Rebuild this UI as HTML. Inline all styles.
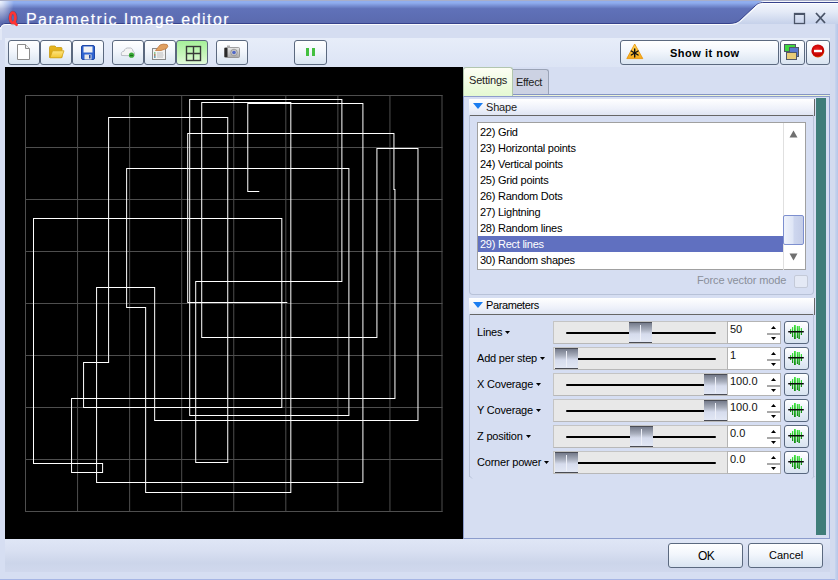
<!DOCTYPE html>
<html><head><meta charset="utf-8">
<style>
*{box-sizing:border-box;margin:0;padding:0}
html,body{width:838px;height:580px;overflow:hidden}
body{position:relative;background:#d6def2;font-family:"Liberation Sans",sans-serif;font-size:11px;color:#000}
.a{position:absolute}
.tb{position:absolute;top:40px;height:25px;border:1px solid #5b697f;border-radius:3px;background:linear-gradient(#ffffff,#f2f6fc 45%,#d9e4f1)}
.lbl{position:absolute;left:477px;font-size:11px;letter-spacing:-0.2px;white-space:nowrap}
.sl{position:absolute;left:553px;width:175px;height:23px;border:1px solid #c4c4c4;border-bottom-color:#b8b8b8;background:#e8e8e8}
.trk{position:absolute;left:12px;width:150px;top:10px;height:2px;border-radius:1px;background:#000}
.th{position:absolute;top:0;width:23px;height:21px;border-top:1px solid #4a4c54;border-bottom:1px solid #4a4c54;background:linear-gradient(#747a8a,#a9afbd 35%,#d6dced 58%,#e2e7f4)}
.th:after{content:"";position:absolute;left:11px;top:2px;width:1px;height:16px;background:#eef0f8}
.sp{position:absolute;left:727px;width:54px;height:23px;border:1px solid #b4b4b4;background:#fff}
.sp span{position:absolute;left:2px;top:1px;font-size:11px;line-height:13px;color:#111}
.gb{position:absolute;left:784px;width:25px;height:23px;border:1px solid #58677e;border-radius:3px;background:linear-gradient(#ffffff,#eaf0f8 50%,#d8e3f0)}
.li{position:absolute;left:480px;height:16px;line-height:16px;font-size:11px;letter-spacing:-0.25px;white-space:nowrap}
</style></head><body>

<!-- title bar -->
<svg class="a" style="left:0;top:0" width="838" height="40">
  <defs>
    <linearGradient id="tg" x1="0" y1="0" x2="0" y2="24" gradientUnits="userSpaceOnUse">
      <stop offset="0" stop-color="#8fadee"/>
      <stop offset="0.12" stop-color="#8fadee"/>
      <stop offset="0.36" stop-color="#6072b9"/>
      <stop offset="1" stop-color="#5a69ae"/>
    </linearGradient>
    <linearGradient id="rg" x1="0" y1="0" x2="0" y2="24" gradientUnits="userSpaceOnUse">
      <stop offset="0" stop-color="#f7f9fe"/>
      <stop offset="0.5" stop-color="#e4eaf7"/>
      <stop offset="1" stop-color="#c6d1ea"/>
    </linearGradient>
    <radialGradient id="glow" cx="0" cy="0" r="1" gradientUnits="objectBoundingBox">
      <stop offset="0" stop-color="#ffffff" stop-opacity="0.85"/>
      <stop offset="1" stop-color="#ffffff" stop-opacity="0"/>
    </radialGradient>
  </defs>
  <rect x="0" y="0" width="838" height="1" fill="#a8aec8"/>
  <rect x="0" y="1" width="838" height="24" fill="url(#rg)"/>
  <rect x="0" y="24" width="838" height="16" fill="#d5ddf1"/>
  <rect x="0" y="28" width="2" height="12" fill="#e2e8f6"/>
  <path d="M0 1 H764 C759 1.5 757 4 755 6 L741 19 C738 22 735 23.5 729 23.5 H5 Q1 23.5 0 27 Z" fill="url(#tg)"/>
  <rect x="0" y="1" width="14" height="22" fill="url(#glow)"/>
  <path d="M0 27 Q1 23.5 5 23.5 H729 C735 23.5 738 22 741 19 L755 6 C757 4 759 2.5 764 2.5 H838" fill="none" stroke="#36428c" stroke-width="1"/>
  <path d="M0.5 29 Q1.5 24.5 6 24.5 H730 C736 24.5 739 23 742 20 L756 7 C758 5 760 3.5 765 3.5 H838" fill="none" stroke="#ffffff" stroke-width="1" opacity="0.9"/>
</svg>
<svg class="a" style="left:7px;top:10px" width="14" height="18">
  <g fill="none" stroke-linecap="round">
    <ellipse cx="6" cy="8" rx="2.8" ry="5.4" stroke="#5a2030" stroke-width="3.6" opacity="0.4"/>
    <ellipse cx="5.8" cy="7.7" rx="2.6" ry="5.1" stroke="#ff3434" stroke-width="2.6"/>
    <path d="M7 12.3 L9.6 14.8" stroke="#ff3434" stroke-width="2.6"/>
  </g>
</svg>
<div class="a" style="left:26px;top:11px;font-size:16px;line-height:18px;letter-spacing:1.45px;color:#fff;white-space:nowrap;text-shadow:0 0 2px rgba(200,215,255,0.5)">Parametric Image editor</div>
<!-- max / close -->
<svg class="a" style="left:792px;top:9px" width="40" height="16">
  <rect x="2.5" y="4.5" width="10" height="10" fill="none" stroke="#4a5468" stroke-width="1.3"/>
  <rect x="2" y="4" width="11" height="2" fill="#4a5468"/>
  <path d="M24 4 L33 14 M33 4 L24 14" stroke="#4a5468" stroke-width="1.8"/>
</svg>

<!-- toolbar strip -->
<div class="a" style="left:5px;top:38px;width:825px;height:29px;background:linear-gradient(#e7edf9,#dce4f5)"></div>
<div class="a" style="left:830px;top:24px;width:8px;height:556px;background:#d3dbef"></div>

<div class="tb" style="left:8px;width:32px"></div>
<div class="tb" style="left:40px;width:32px"></div>
<div class="tb" style="left:72px;width:32px"></div>
<div class="tb" style="left:112px;width:32px"></div>
<div class="tb" style="left:144px;width:32px"></div>
<div class="tb" style="left:176px;width:32px;background:linear-gradient(#a6f09a,#c8f6bc 60%,#e2fadb)"></div>
<div class="tb" style="left:216px;width:32px"></div>
<div class="tb" style="left:294px;width:33px"></div>
<div class="tb" style="left:620px;width:159px"></div>
<div class="tb" style="left:780px;width:25px"></div>
<div class="tb" style="left:806px;width:24px"></div>

<!-- toolbar icons -->
<svg class="a" style="left:0;top:38px" width="340" height="28">
  <defs>
    <linearGradient id="fold" x1="0" y1="0" x2="0" y2="1"><stop offset="0" stop-color="#ffe680"/><stop offset="1" stop-color="#f2c530"/></linearGradient>
    <linearGradient id="foldb" x1="0" y1="0" x2="0" y2="1"><stop offset="0" stop-color="#e9b820"/><stop offset="1" stop-color="#d9a010"/></linearGradient>
    <linearGradient id="cam" x1="0" y1="0" x2="0" y2="1"><stop offset="0" stop-color="#e8e8e8"/><stop offset="1" stop-color="#a8a8a8"/></linearGradient>
  </defs>
  <!-- new page -->
  <path d="M17.5 6.5 H25.5 L29.5 10.5 V21.5 H17.5 Z" fill="#ffffff" stroke="#8c8c8c" stroke-width="1"/>
  <path d="M25.5 6.5 V10.5 H29.5" fill="#f0f0f0" stroke="#8c8c8c" stroke-width="1"/>
  <!-- folder -->
  <path d="M49.5 9.5 Q49.5 8 51 8 H55 L56.5 9.5 H61 Q62 9.5 62 10.5 V19.5 H49.5 Z" fill="url(#foldb)" stroke="#c89a10" stroke-width="0.8"/>
  <path d="M50 19.8 L52.5 12.8 H64 L61.5 19.8 Z" fill="url(#fold)" stroke="#d2a418" stroke-width="0.8"/>
  <!-- save -->
  <rect x="81.5" y="7.5" width="13" height="14" rx="1.5" fill="#2f63d0" stroke="#1e48a8" stroke-width="1"/>
  <rect x="83.5" y="8.5" width="9" height="6" fill="#f2f2f2"/>
  <rect x="84.5" y="16.5" width="7" height="5" fill="#e8e8e8"/>
  <rect x="89" y="17" width="1.6" height="3.5" fill="#1e48a8"/>
  <!-- cloud -->
  <path d="M121.5 17.5 Q120.5 13.5 124 13.2 Q125 9.5 129 10 Q132.5 9.5 133 13.2 Q135 14 134.5 17.8 Z" fill="#f4f4f4" stroke="#b4b8c0" stroke-width="0.9"/>
  <circle cx="131.5" cy="17.2" r="2.6" fill="#38a838"/>
  <path d="M130 17.4 H133" stroke="#1a6a1a" stroke-width="1"/>
  <!-- clipboard/hand -->
  <rect x="152.5" y="10.5" width="13" height="11" fill="#f2f2f2" stroke="#8a8a8a" stroke-width="1"/>
  <path d="M154 15 H155.5 M154 17 H155.5 M154 19 H155.5" stroke-width="1.2" stroke="#30a030"/>
  <path d="M154 17 H155.5" stroke="#d04040" stroke-width="1.2"/>
  <path d="M154 19 H155.5" stroke="#4070e0" stroke-width="1.2"/>
  <path d="M157 15 H163 M157 17 H163.5 M157 19 H163" stroke="#b0b0b0" stroke-width="0.8"/>
  <path d="M155.5 12.5 L160 7 Q163 5.5 167 6.5 Q169 8 166.5 10.5 L161 12.5 Z" fill="#e0a060" stroke="#c07a40" stroke-width="0.8"/>
  <!-- grid icon -->
  <rect x="186.5" y="8.5" width="14" height="14" fill="none" stroke="#383838" stroke-width="1.4"/>
  <path d="M193.5 8.5 V22.5 M186.5 15.5 H200.5" stroke="#383838" stroke-width="1.4"/>
  <!-- camera -->
  <rect x="224.5" y="9.5" width="15" height="10" rx="1" fill="url(#cam)" stroke="#8a8a8a" stroke-width="0.8"/>
  <rect x="224.5" y="10" width="3" height="9" fill="#2a2a2a"/>
  <rect x="227" y="7.5" width="3" height="2" fill="#b0b0b0"/>
  <circle cx="234" cy="14.5" r="3.3" fill="#c8c8c8" stroke="#909090" stroke-width="0.8"/>
  <circle cx="234" cy="14.5" r="1.8" fill="#5068c8"/>
  <!-- pause -->
  <rect x="306" y="10" width="3" height="8" fill="#44c040"/>
  <rect x="312" y="10" width="3" height="8" fill="#44c040"/>
</svg>
<svg class="a" style="left:620px;top:38px" width="218" height="28">
  <defs>
    <linearGradient id="warn" x1="0" y1="0" x2="0" y2="1"><stop offset="0" stop-color="#ffd860"/><stop offset="1" stop-color="#f5a818"/></linearGradient>
    <radialGradient id="stopg" cx="0.45" cy="0.4" r="0.6"><stop offset="0" stop-color="#f02020"/><stop offset="0.8" stop-color="#c00000"/><stop offset="1" stop-color="#e05000"/></radialGradient>
  </defs>
  <path d="M14.7 6 L22.8 20.6 H6.8 Z" fill="url(#warn)" stroke="#e89000" stroke-width="0.8" stroke-linejoin="round"/>
  <g stroke="#111" stroke-width="1.4" stroke-linecap="round">
    <path d="M14.7 11 V19"/><path d="M11.3 13 L18.1 17"/><path d="M18.1 13 L11.3 17"/>
  </g>
  <!-- layers -->
  <rect x="164.5" y="6.5" width="11" height="7" fill="#40d840" stroke="#505868" stroke-width="1"/>
  <rect x="169.5" y="9.5" width="9" height="9" fill="#5878d0" stroke="#505868" stroke-width="1"/>
  <rect x="166.5" y="14.5" width="10" height="7" fill="#e8cc78" stroke="#505868" stroke-width="1"/>
  <!-- stop -->
  <circle cx="197.9" cy="12.9" r="6.5" fill="url(#stopg)"/>
  <rect x="194" y="11.8" width="8" height="2.4" fill="#ffffff"/>
</svg>
<!-- canvas -->
<div class="a" style="left:5px;top:67px;width:458px;height:472px;background:#000"></div>
<svg class="a" style="left:0;top:0" width="463" height="539">
 <g transform="translate(25.5,0) scale(1.0012,1) translate(-25.5,0)">
  <g stroke="#4e4e4e" stroke-width="1" fill="none"><line x1="25.5" y1="95" x2="25.5" y2="512"></line><line x1="25" y1="95.5" x2="442" y2="95.5"></line><line x1="77.5" y1="95" x2="77.5" y2="512"></line><line x1="25" y1="147.5" x2="442" y2="147.5"></line><line x1="129.5" y1="95" x2="129.5" y2="512"></line><line x1="25" y1="199.5" x2="442" y2="199.5"></line><line x1="181.5" y1="95" x2="181.5" y2="512"></line><line x1="25" y1="251.5" x2="442" y2="251.5"></line><line x1="233.5" y1="95" x2="233.5" y2="512"></line><line x1="25" y1="303.5" x2="442" y2="303.5"></line><line x1="285.5" y1="95" x2="285.5" y2="512"></line><line x1="25" y1="355.5" x2="442" y2="355.5"></line><line x1="337.5" y1="95" x2="337.5" y2="512"></line><line x1="25" y1="407.5" x2="442" y2="407.5"></line><line x1="389.5" y1="95" x2="389.5" y2="512"></line><line x1="25" y1="459.5" x2="442" y2="459.5"></line><line x1="441.5" y1="95" x2="441.5" y2="512"></line><line x1="25" y1="511.5" x2="442" y2="511.5"></line></g>
  <polyline id="pl" fill="none" stroke="#ffffff" stroke-width="1" stroke-linecap="square" points="258.5,191.5 247.5,191.5 247.5,103.5 362.5,103.5 362.5,482.5 96.5,482.5 96.5,287.5 154.5,287.5 154.5,420.5 417.5,420.5 417.5,148.5 376.5,148.5 376.5,337.5 201.5,337.5 201.5,102.5 290.5,102.5 290.5,492.5 145.5,492.5 145.5,307.5 126.5,307.5 126.5,168.5 348.5,168.5 348.5,415.5 189.5,415.5 189.5,99.5 341.5,99.5 341.5,281.5 195.5,281.5 195.5,462.5 227.5,462.5 227.5,117.5 108.5,117.5 108.5,362.5 83.5,362.5 83.5,407.5 281.5,407.5 281.5,218.5 33.5,218.5 33.5,463.5 102.5,463.5 102.5,472.5 71.5,472.5 71.5,398.5 394.5,398.5 394.5,189.5 393.5,189.5 393.5,133.5 187.5,133.5 187.5,302.5 286.5,302.5"/>
 </g>
</svg>

<!-- right panel -->
<div class="a" style="left:463px;top:96px;width:367px;height:443px;border:1px solid #8c9ccc;background:#d6def2"></div>
<!-- tabs -->
<div class="a" style="left:513px;top:94px;width:317px;height:1px;background:#8494c4"></div>
<div class="a" style="left:463px;top:95px;width:366px;height:1px;background:#eef5d6"></div>
<div class="a" style="left:513px;top:69px;width:36px;height:25px;border:1px solid #9aa3b6;border-left:none;border-bottom:none;border-radius:0 3px 0 0;background:#ccd2e3"></div>
<div class="a" style="left:463px;top:67px;width:50px;height:29px;border:1px solid #b2c6ae;border-bottom:none;border-radius:3px 3px 0 0;background:linear-gradient(#fdfef4,#e4f9d2)"></div>
<div class="a" style="left:469px;top:74px;font-size:11px;letter-spacing:-0.2px;color:#222">Settings</div>
<div class="a" style="left:516px;top:76px;font-size:11px;letter-spacing:-0.3px;color:#222">Effect</div>
<div class="a" style="left:463px;top:96px;width:367px;height:1px;background:#8c9ccc"></div>

<!-- teal bar -->
<div class="a" style="left:816px;top:98px;width:10px;height:437px;background:#3f7d79"></div>

<!-- shape header -->
<div class="a" style="left:469px;top:99px;width:346px;height:17px;border-right:1px solid #666;border-bottom:1px solid #666;background:linear-gradient(#ffffff,#eef1fa 60%,#dfe5f3)"></div>
<svg class="a" style="left:473px;top:103px" width="11" height="7"><path d="M0 0 H10 L5 6 Z" fill="#1a7cf0"/></svg>
<div class="a" style="left:486px;top:101px;font-size:11px;letter-spacing:-0.2px;color:#222">Shape</div>
<!-- shape body -->
<div class="a" style="left:469px;top:115px;width:345px;height:180px;border-left:1px solid #b8c2d8;border-right:1px solid #b8c2d8;border-bottom:1px solid #b8c2d8;border-radius:0 0 4px 4px"></div>
<!-- list -->
<div class="a" style="left:477px;top:122px;width:329px;height:148px;border:1px solid #a0a0a0;background:#fff;overflow:hidden">
</div>
<div class="a" style="left:478px;top:236px;width:306px;height:16px;background:#6070c0"></div>
<div class="li" style="top:124px">22) Grid</div>
<div class="li" style="top:140px">23) Horizontal points</div>
<div class="li" style="top:156px">24) Vertical points</div>
<div class="li" style="top:172px">25) Grid points</div>
<div class="li" style="top:188px">26) Random Dots</div>
<div class="li" style="top:204px">27) Lightning</div>
<div class="li" style="top:220px">28) Random lines</div>
<div class="li" style="top:236px;color:#fff">29) Rect lines</div>
<div class="li" style="top:252px">30) Random shapes</div>
<div class="a" style="left:783px;top:123px;width:1px;height:147px;background:#e0e0e0"></div>
<svg class="a" style="left:789px;top:130px" width="10" height="8"><path d="M0.5 7.5 L4.5 0.5 L8.5 7.5 Z" fill="#707070"/></svg>
<svg class="a" style="left:789px;top:253px" width="10" height="8"><path d="M0.5 0.5 L4.5 7.5 L8.5 0.5 Z" fill="#707070"/></svg>
<div class="a" style="left:783px;top:215px;width:21px;height:30px;border:1px solid #7d8fcf;border-radius:2px;background:linear-gradient(90deg,#eef2fb,#dfe6f6 45%,#cdd6ee 55%,#c4cde8)"></div>
<div class="a" style="left:697px;top:274px;font-size:11px;color:#8a8f9a;letter-spacing:-0.15px;white-space:nowrap">Force vector mode</div>
<div class="a" style="left:794px;top:275px;width:14px;height:13px;border:1px solid #c4cad8;border-radius:2px;background:#e4e9f5"></div>

<!-- parameters header -->
<div class="a" style="left:469px;top:298px;width:346px;height:17px;border-right:1px solid #666;border-bottom:1px solid #666;background:linear-gradient(#ffffff,#eef1fa 60%,#dfe5f3)"></div>
<svg class="a" style="left:473px;top:302px" width="11" height="7"><path d="M0 0 H10 L5 6 Z" fill="#1a7cf0"/></svg>
<div class="a" style="left:486px;top:299px;font-size:11px;letter-spacing:-0.4px">Parameters</div>
<div class="a" style="left:469px;top:314px;width:345px;height:163px;border-left:1px solid #b8c2d8;border-right:1px solid #b8c2d8"></div>
<svg class="a" style="left:469px;top:476px" width="346" height="4"><path d="M0.5 0 L3 2.5 M345.5 0 L343 2.5" stroke="#b8c2d8" stroke-width="1"/></svg>

<div><div class="lbl" style="top:326px">Lines<svg width="8" height="4" style="margin-left:3px;vertical-align:1px"><path d="M0 0H5L2.5 3Z" fill="#000"></path></svg></div><div class="sl" style="top:321px"><div class="trk"></div><div class="th" style="left:75px"></div></div><div class="sp" style="top:321px"><span>50</span><svg style="position:absolute;left:39px;top:0" width="14" height="21"><path d="M4 7 L6.5 4 L9 7Z" fill="#000"></path><rect x="0" y="11" width="13" height="2" fill="#a8a8a8"></rect><path d="M4 15 L6.5 18 L9 15Z" fill="#000"></path></svg></div><div class="gb" style="top:321px"><svg style="position:absolute;left:3px;top:3px" width="18" height="16"><defs><linearGradient id="wg" x1="0" y1="0" x2="0" y2="1"><stop offset="0" stop-color="#40e840"></stop><stop offset="1" stop-color="#0c8a0c"></stop></linearGradient></defs><g fill="url(#wg)"><rect x="2" y="4" width="1.2" height="5"></rect><rect x="4" y="2" width="1.2" height="10"></rect><rect x="6" y="0" width="1.8" height="14"></rect><rect x="8.8" y="1" width="1.2" height="12"></rect><rect x="10.4" y="1" width="1.5" height="13"></rect><rect x="12.8" y="3" width="1.2" height="7"></rect></g><rect x="0" y="6" width="16" height="1.6" rx="0.8" fill="#0a0a0a"></rect></svg></div><div class="lbl" style="top:352px">Add per step<svg width="8" height="4" style="margin-left:3px;vertical-align:1px"><path d="M0 0H5L2.5 3Z" fill="#000"></path></svg></div><div class="sl" style="top:347px"><div class="trk"></div><div class="th" style="left:1px"></div></div><div class="sp" style="top:347px"><span>1</span><svg style="position:absolute;left:39px;top:0" width="14" height="21"><path d="M4 7 L6.5 4 L9 7Z" fill="#000"></path><rect x="0" y="11" width="13" height="2" fill="#a8a8a8"></rect><path d="M4 15 L6.5 18 L9 15Z" fill="#000"></path></svg></div><div class="gb" style="top:347px"><svg style="position:absolute;left:3px;top:3px" width="18" height="16"><defs><linearGradient id="wg" x1="0" y1="0" x2="0" y2="1"><stop offset="0" stop-color="#40e840"></stop><stop offset="1" stop-color="#0c8a0c"></stop></linearGradient></defs><g fill="url(#wg)"><rect x="2" y="4" width="1.2" height="5"></rect><rect x="4" y="2" width="1.2" height="10"></rect><rect x="6" y="0" width="1.8" height="14"></rect><rect x="8.8" y="1" width="1.2" height="12"></rect><rect x="10.4" y="1" width="1.5" height="13"></rect><rect x="12.8" y="3" width="1.2" height="7"></rect></g><rect x="0" y="6" width="16" height="1.6" rx="0.8" fill="#0a0a0a"></rect></svg></div><div class="lbl" style="top:378px">X Coverage<svg width="8" height="4" style="margin-left:3px;vertical-align:1px"><path d="M0 0H5L2.5 3Z" fill="#000"></path></svg></div><div class="sl" style="top:373px"><div class="trk"></div><div class="th" style="left:150px"></div></div><div class="sp" style="top:373px"><span>100.0</span><svg style="position:absolute;left:39px;top:0" width="14" height="21"><path d="M4 7 L6.5 4 L9 7Z" fill="#000"></path><rect x="0" y="11" width="13" height="2" fill="#a8a8a8"></rect><path d="M4 15 L6.5 18 L9 15Z" fill="#000"></path></svg></div><div class="gb" style="top:373px"><svg style="position:absolute;left:3px;top:3px" width="18" height="16"><defs><linearGradient id="wg" x1="0" y1="0" x2="0" y2="1"><stop offset="0" stop-color="#40e840"></stop><stop offset="1" stop-color="#0c8a0c"></stop></linearGradient></defs><g fill="url(#wg)"><rect x="2" y="4" width="1.2" height="5"></rect><rect x="4" y="2" width="1.2" height="10"></rect><rect x="6" y="0" width="1.8" height="14"></rect><rect x="8.8" y="1" width="1.2" height="12"></rect><rect x="10.4" y="1" width="1.5" height="13"></rect><rect x="12.8" y="3" width="1.2" height="7"></rect></g><rect x="0" y="6" width="16" height="1.6" rx="0.8" fill="#0a0a0a"></rect></svg></div><div class="lbl" style="top:404px">Y Coverage<svg width="8" height="4" style="margin-left:3px;vertical-align:1px"><path d="M0 0H5L2.5 3Z" fill="#000"></path></svg></div><div class="sl" style="top:399px"><div class="trk"></div><div class="th" style="left:150px"></div></div><div class="sp" style="top:399px"><span>100.0</span><svg style="position:absolute;left:39px;top:0" width="14" height="21"><path d="M4 7 L6.5 4 L9 7Z" fill="#000"></path><rect x="0" y="11" width="13" height="2" fill="#a8a8a8"></rect><path d="M4 15 L6.5 18 L9 15Z" fill="#000"></path></svg></div><div class="gb" style="top:399px"><svg style="position:absolute;left:3px;top:3px" width="18" height="16"><defs><linearGradient id="wg" x1="0" y1="0" x2="0" y2="1"><stop offset="0" stop-color="#40e840"></stop><stop offset="1" stop-color="#0c8a0c"></stop></linearGradient></defs><g fill="url(#wg)"><rect x="2" y="4" width="1.2" height="5"></rect><rect x="4" y="2" width="1.2" height="10"></rect><rect x="6" y="0" width="1.8" height="14"></rect><rect x="8.8" y="1" width="1.2" height="12"></rect><rect x="10.4" y="1" width="1.5" height="13"></rect><rect x="12.8" y="3" width="1.2" height="7"></rect></g><rect x="0" y="6" width="16" height="1.6" rx="0.8" fill="#0a0a0a"></rect></svg></div><div class="lbl" style="top:430px">Z position<svg width="8" height="4" style="margin-left:3px;vertical-align:1px"><path d="M0 0H5L2.5 3Z" fill="#000"></path></svg></div><div class="sl" style="top:425px"><div class="trk"></div><div class="th" style="left:76px"></div></div><div class="sp" style="top:425px"><span>0.0</span><svg style="position:absolute;left:39px;top:0" width="14" height="21"><path d="M4 7 L6.5 4 L9 7Z" fill="#000"></path><rect x="0" y="11" width="13" height="2" fill="#a8a8a8"></rect><path d="M4 15 L6.5 18 L9 15Z" fill="#000"></path></svg></div><div class="gb" style="top:425px"><svg style="position:absolute;left:3px;top:3px" width="18" height="16"><defs><linearGradient id="wg" x1="0" y1="0" x2="0" y2="1"><stop offset="0" stop-color="#40e840"></stop><stop offset="1" stop-color="#0c8a0c"></stop></linearGradient></defs><g fill="url(#wg)"><rect x="2" y="4" width="1.2" height="5"></rect><rect x="4" y="2" width="1.2" height="10"></rect><rect x="6" y="0" width="1.8" height="14"></rect><rect x="8.8" y="1" width="1.2" height="12"></rect><rect x="10.4" y="1" width="1.5" height="13"></rect><rect x="12.8" y="3" width="1.2" height="7"></rect></g><rect x="0" y="6" width="16" height="1.6" rx="0.8" fill="#0a0a0a"></rect></svg></div><div class="lbl" style="top:456px">Corner power<svg width="8" height="4" style="margin-left:3px;vertical-align:1px"><path d="M0 0H5L2.5 3Z" fill="#000"></path></svg></div><div class="sl" style="top:451px"><div class="trk"></div><div class="th" style="left:1px"></div></div><div class="sp" style="top:451px"><span>0.0</span><svg style="position:absolute;left:39px;top:0" width="14" height="21"><path d="M4 7 L6.5 4 L9 7Z" fill="#000"></path><rect x="0" y="11" width="13" height="2" fill="#a8a8a8"></rect><path d="M4 15 L6.5 18 L9 15Z" fill="#000"></path></svg></div><div class="gb" style="top:451px"><svg style="position:absolute;left:3px;top:3px" width="18" height="16"><defs><linearGradient id="wg" x1="0" y1="0" x2="0" y2="1"><stop offset="0" stop-color="#40e840"></stop><stop offset="1" stop-color="#0c8a0c"></stop></linearGradient></defs><g fill="url(#wg)"><rect x="2" y="4" width="1.2" height="5"></rect><rect x="4" y="2" width="1.2" height="10"></rect><rect x="6" y="0" width="1.8" height="14"></rect><rect x="8.8" y="1" width="1.2" height="12"></rect><rect x="10.4" y="1" width="1.5" height="13"></rect><rect x="12.8" y="3" width="1.2" height="7"></rect></g><rect x="0" y="6" width="16" height="1.6" rx="0.8" fill="#0a0a0a"></rect></svg></div></div>

<!-- bottom -->
<div class="a" style="left:5px;top:539px;width:825px;height:33px;background:linear-gradient(#dfe6f6,#d9e0f2 35%,#ccd5ea 72%,#d0d8ed)"></div>
<div class="a" style="left:0;top:579px;width:838px;height:1px;background:#a6b5e4"></div>
<div class="a" style="left:835px;top:24px;width:3px;height:556px;background:linear-gradient(90deg,#c9d5ee,#b6c6e8)"></div>
<div class="tb" style="left:668px;top:543px;width:75px;height:25px"></div>
<div class="tb" style="left:748px;top:543px;width:75px;height:25px"></div>
<div class="a" style="left:698px;top:549px;font-size:12px;letter-spacing:-0.6px">OK</div>
<div class="a" style="left:769px;top:549px;font-size:11px">Cancel</div>

<div class="a" style="left:670px;top:47px;font-size:11px;font-weight:bold;letter-spacing:0.5px;white-space:nowrap">Show it now</div>


</body></html>
